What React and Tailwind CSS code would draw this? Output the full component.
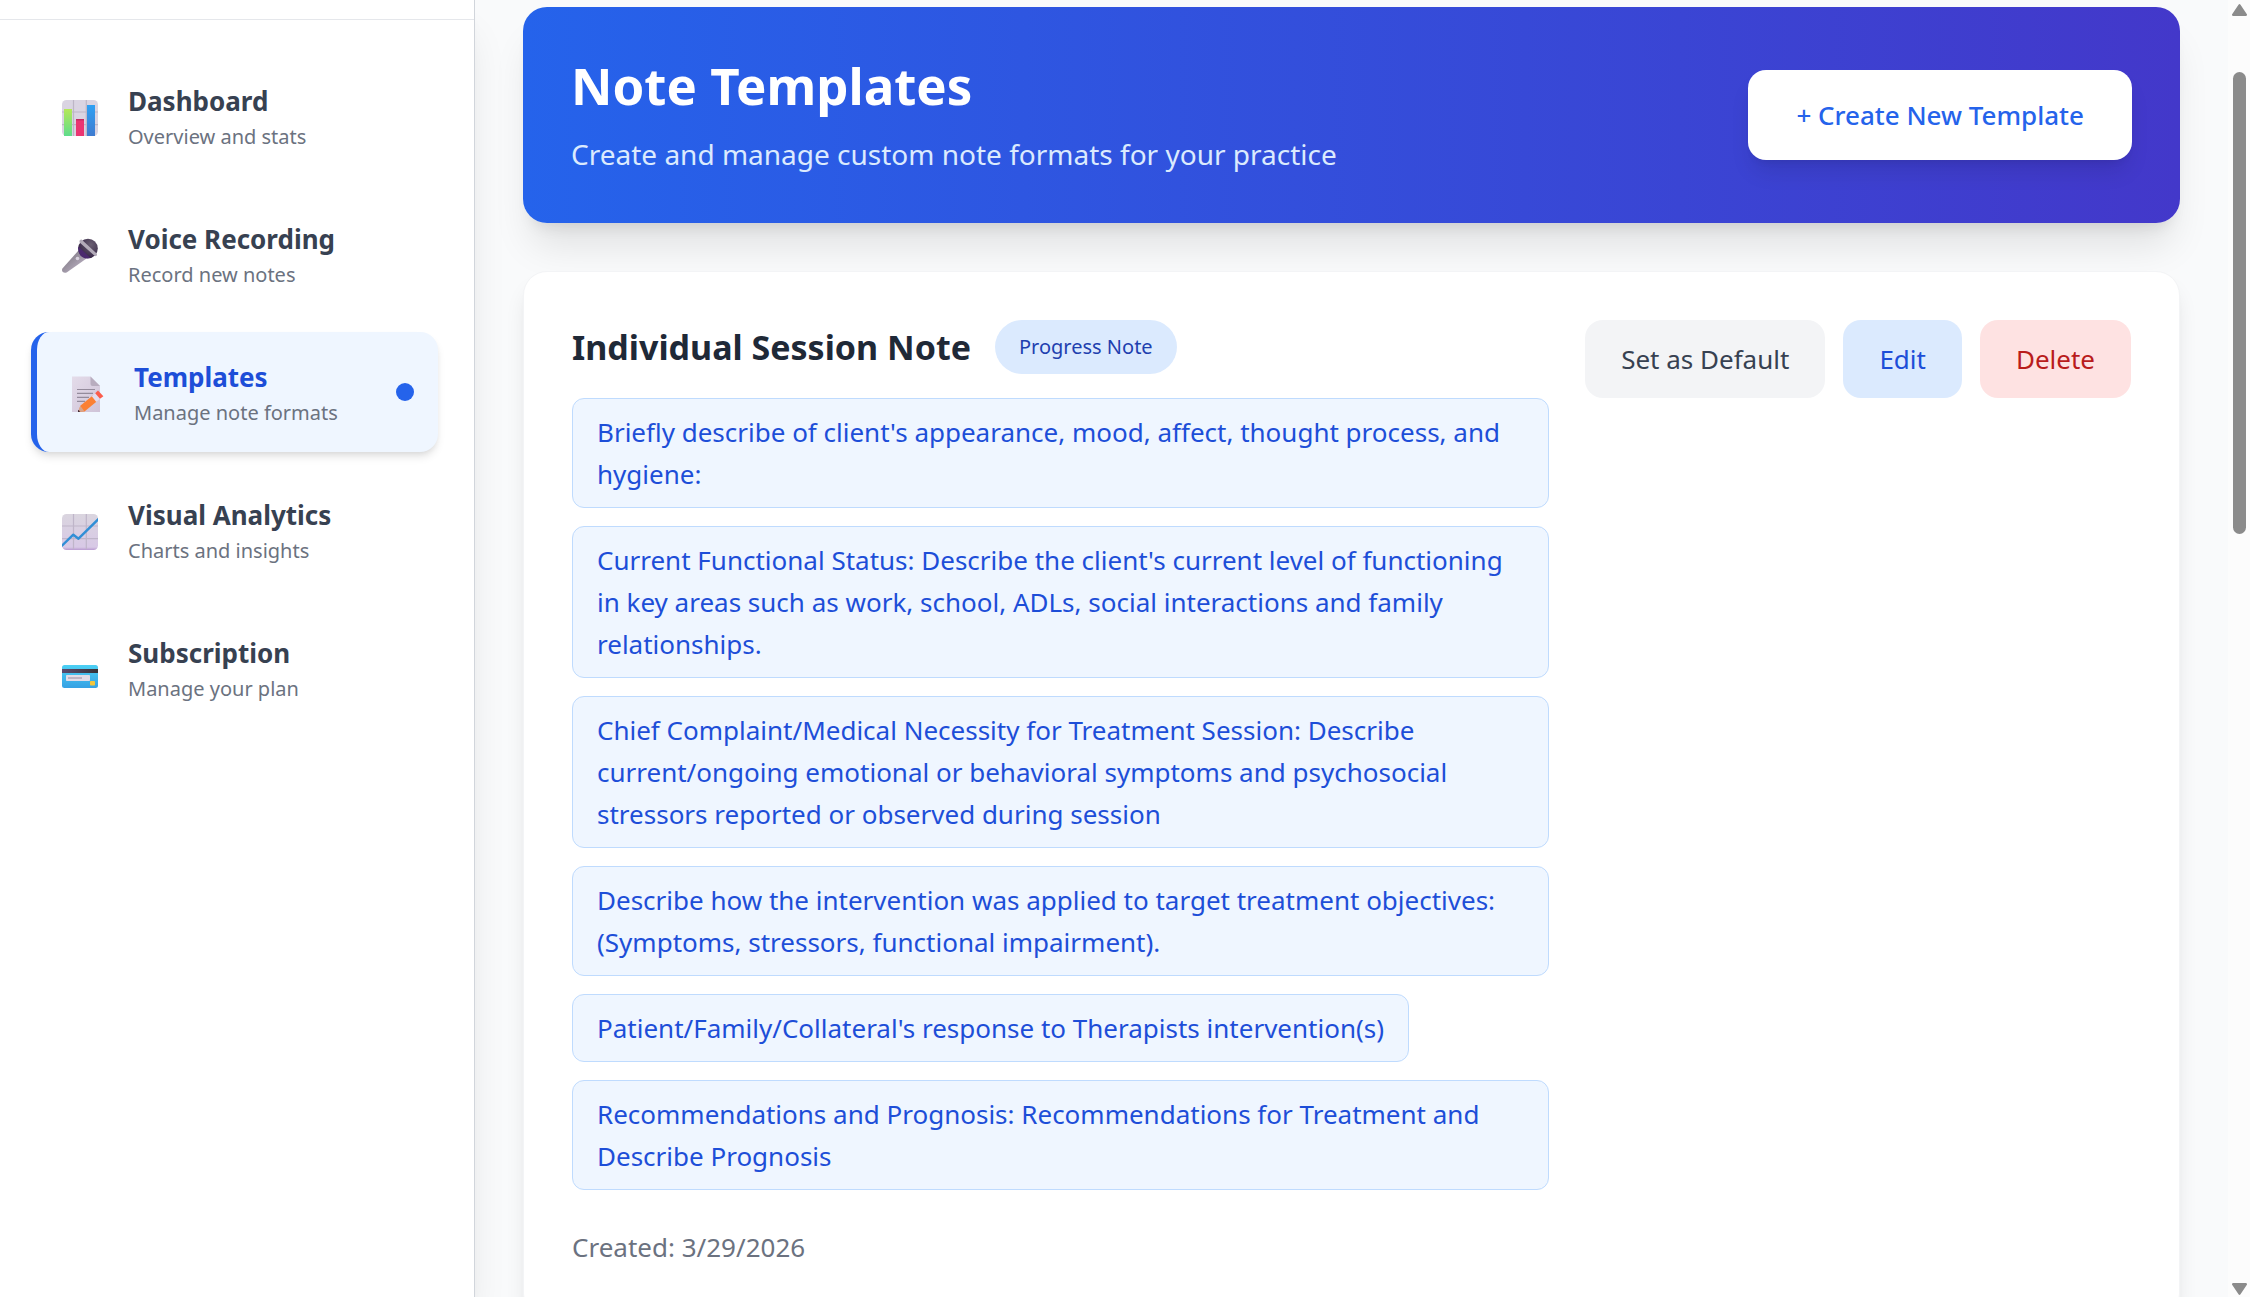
import clsx from 'clsx';

function BarChartIcon() {
  return (
    <svg viewBox="0 0 36 36" className="w-9 h-9 mt-1" aria-hidden="true">
      <defs>
        <linearGradient id="bar-green" x1="0" y1="0" x2="0" y2="1">
          <stop offset="0" stopColor="#b5e858" />
          <stop offset="1" stopColor="#5fdc8c" />
        </linearGradient>
        <linearGradient id="bar-blue" x1="0" y1="0" x2="0" y2="1">
          <stop offset="0" stopColor="#2fa0f3" />
          <stop offset="1" stopColor="#3f7bd0" />
        </linearGradient>
      </defs>
      <rect width="36" height="36" rx="4.5" fill="#dad4e2" />
      <path d="M11.5 0v36M24.3 0v36M0 12h36M0 24.6h36" stroke="#bdb6c6" strokeWidth="1.2" />
      <path d="M2 9h8v27H2z" fill="url(#bar-green)" />
      <path d="M14 19h8v17h-8z" fill="#ea3572" />
      <path d="M14 19h8v1.4h-8z" fill="#c42a60" />
      <path d="M25 5h8v31h-8z" fill="url(#bar-blue)" />
    </svg>
  );
}

function MicIcon() {
  return (
    <svg viewBox="0 0 36 36" className="w-9 h-9 mt-1" aria-hidden="true">
      <defs>
        <linearGradient id="mic-body" x1="0" y1="0" x2="1" y2="1">
          <stop offset="0.3" stopColor="#8b8490" />
          <stop offset="0.8" stopColor="#b9afc1" />
        </linearGradient>
        <radialGradient id="mic-head" cx="0.65" cy="0.3" r="0.7">
          <stop offset="0" stopColor="#6a5f72" />
          <stop offset="1" stopColor="#352545" />
        </radialGradient>
      </defs>
      <path d="M16.5 12.5 24.5 20.5 5 34.3c-3.2 1.6-6-.8-4.6-3.9z" fill="url(#mic-body)" />
      <circle cx="26" cy="10.5" r="9.8" fill="url(#mic-head)" />
      <path d="M16.4 8.5 28.5 20c-5 1.4-9.5-.5-11.3-4.5-1-2.2-1.3-4.7-.8-7z" fill="#4b2a6e" />
      <path d="M19.6 1.6 34.9 15.8c.5 1.4-.6 2.8-2 2.3L17.6 4.6c-.6-1.6.5-3.2 2-3z" fill="#b3abb9" />
      <circle cx="15.5" cy="20.5" r="1.8" fill="#d8d2de" />
    </svg>
  );
}

function MemoIcon() {
  return (
    <svg viewBox="0 0 36 36" className="w-9 h-9 mt-1" aria-hidden="true">
      <defs>
        <linearGradient id="memo-paper" x1="0" y1="0" x2="1" y2="1">
          <stop offset="0" stopColor="#e4dcea" />
          <stop offset="1" stopColor="#cfc3d8" />
        </linearGradient>
      </defs>
      <path d="M4 .5h18.5L32 10v26H4z" fill="url(#memo-paper)" />
      <path d="M22.5.5 32 10h-7.5a2 2 0 0 1-2-2z" fill="#b8adbf" />
      <path d="M9 13.5h18M9 17.3h16M9 21.4h12M9 25.4h8" stroke="#948b9c" strokeWidth="1.2" />
      <path d="M10.5 36 12.3 29.7 24.8 19.5 29.3 25 16.5 35.5z" fill="#fb8034" />
      <path d="M10 36 12.3 29.7 16.5 35.5z" fill="#d9a58c" />
      <path d="M10 36.2v-2.5l2.3 1.8z" fill="#402a32" />
      <path d="M23.8 20.3 27.2 17.2 32 22.8 28.3 26z" fill="#e3dcee" />
      <path d="M27.2 17.2 30 14.5 35.4 20.2 32 22.8z" fill="#fb5c4c" />
    </svg>
  );
}

function TrendIcon() {
  return (
    <svg viewBox="0 0 36 36" className="w-9 h-9 mt-1" aria-hidden="true">
      <defs>
        <linearGradient id="trend-bg" x1="0" y1="0" x2="0" y2="1">
          <stop offset="0" stopColor="#dad5df" />
          <stop offset="0.92" stopColor="#d8c9e6" />
          <stop offset="1" stopColor="#b99bd0" />
        </linearGradient>
        <clipPath id="trend-clip">
          <rect width="36" height="36" rx="4.5" />
        </clipPath>
      </defs>
      <g clipPath="url(#trend-clip)">
        <rect width="36" height="36" fill="url(#trend-bg)" />
        <path d="M11.5 0v35M24.3 0v35M0 12h36M0 24.6h36" stroke="#bfb5c9" strokeWidth="1.2" />
        <path d="M-1 32.5 11.3 20.7 16.5 24.7 37 4.5" fill="none" stroke="#318fd6" strokeWidth="2.4" strokeLinejoin="round" />
      </g>
    </svg>
  );
}

function CardIcon() {
  return (
    <svg viewBox="0 0 36 36" className="w-9 h-9 mt-1" aria-hidden="true">
      <defs>
        <linearGradient id="card-bg" x1="0" y1="0" x2="0" y2="1">
          <stop offset="0" stopColor="#4cd0f4" />
          <stop offset="1" stopColor="#36a1e4" />
        </linearGradient>
        <linearGradient id="card-strip" x1="0" y1="0" x2="1" y2="0">
          <stop offset="0" stopColor="#5b4a70" />
          <stop offset="1" stopColor="#363338" />
        </linearGradient>
      </defs>
      <rect y="13" width="36" height="23" rx="2.5" fill="url(#card-bg)" />
      <path d="M0 17h36v4H0z" fill="url(#card-strip)" />
      <rect x="4" y="23" width="24" height="6" rx="0.8" fill="#e2dce8" />
      <path d="M6 26h14" stroke="#b4abbc" strokeWidth="1.6" />
      <rect x="28" y="29" width="5" height="4.5" rx="0.8" fill="#f3c63c" />
    </svg>
  );
}

const navItems = [
  { name: 'Dashboard', description: 'Overview and stats', icon: BarChartIcon },
  { name: 'Voice Recording', description: 'Record new notes', icon: MicIcon },
  { name: 'Templates', description: 'Manage note formats', icon: MemoIcon, active: true },
  { name: 'Visual Analytics', description: 'Charts and insights', icon: TrendIcon },
  { name: 'Subscription', description: 'Manage your plan', icon: CardIcon },
];

const template = {
  name: 'Individual Session Note',
  type: 'Progress Note',
  created: '3/29/2026',
  sections: [
    "Briefly describe of client's appearance, mood, affect, thought process, and hygiene:",
    "Current Functional Status: Describe the client's current level of functioning in key areas such as work, school, ADLs, social interactions and family relationships.",
    'Chief Complaint/Medical Necessity for Treatment Session: Describe current/ongoing emotional or behavioral symptoms and psychosocial stressors reported or observed during session',
    'Describe how the intervention was applied to target treatment objectives: (Symptoms, stressors, functional impairment).',
    "Patient/Family/Collateral's response to Therapists intervention(s)",
    'Recommendations and Prognosis: Recommendations for Treatment and Describe Prognosis',
  ],
};

function Sidebar() {
  return (
    <aside className="relative z-10 w-[475px] shrink-0 bg-white border-r border-[#d1d5db] shadow-[0_30px_38px_-8px_rgba(0,0,0,0.1),0_12px_15px_-9px_rgba(0,0,0,0.1)]">
      <div className="h-5 border-b border-[#e5e7eb]" />
      <nav className="flex flex-col gap-[18px] pt-9 pl-[31px] pr-9">
        {navItems.map(({ name, description, icon: Icon, active }) => (
          <a
            key={name}
            href="#"
            className={clsx(
              'flex items-center gap-6 p-6 rounded-[18px]',
              active && 'bg-[#eff6ff] border-l-[6px] border-[#2563eb] shadow-[0_6px_9px_-1px_rgba(0,0,0,0.1),0_3px_6px_-3px_rgba(0,0,0,0.1)]'
            )}
          >
            <span className="w-[49px] flex justify-center">
              <Icon />
            </span>
            <span className="flex-1">
              <span className={clsx('block text-[26px] leading-[42px] font-bold', active ? 'text-[#1d4ed8]' : 'text-[#374151]')}>
                {name}
              </span>
              <span className="block text-[20px] leading-[30px] text-[#6b7280]">{description}</span>
            </span>
            {active && <span className="size-[18px] rounded-full bg-[#2563eb]" />}
          </a>
        ))}
      </nav>
    </aside>
  );
}

function PageHeader() {
  return (
    <header className="flex items-center justify-between p-12 rounded-3xl bg-linear-to-r/srgb from-[#2563eb] to-[#4338ca] shadow-[0_30px_38px_-8px_rgba(0,0,0,0.1),0_12px_15px_-9px_rgba(0,0,0,0.1)]">
      <div>
        <h1 className="text-[51px] leading-[60px] font-bold text-white">Note Templates</h1>
        <p className="mt-[18px] text-[28px] leading-[42px] text-[#dbeafe]">
          Create and manage custom note formats for your practice
        </p>
      </div>
      <button className="px-12 py-6 rounded-[18px] bg-white text-[26px] leading-[42px] font-medium text-[#2563eb] shadow-[0_15px_22px_-4px_rgba(0,0,0,0.1),0_6px_9px_-6px_rgba(0,0,0,0.1)]">
        + Create New Template
      </button>
    </header>
  );
}

function TemplateCard({ name, type, created, sections }) {
  return (
    <article className="flex items-start gap-9 p-12 rounded-3xl bg-white border border-[#f3f4f6] shadow-[0_15px_22px_-4px_rgba(0,0,0,0.1),0_6px_9px_-6px_rgba(0,0,0,0.1)]">
      <div className="flex-1">
        <div className="flex items-center gap-6 mb-6">
          <h2 className="text-[34px] leading-[48px] font-bold text-[#1f2937]">{name}</h2>
          <span className="px-6 py-3 rounded-full bg-[#dbeafe] text-[20px] leading-[30px] font-[450] text-[#1e40af]">
            {type}
          </span>
        </div>
        <ul className="flex flex-col items-start gap-[18px]">
          {sections.map((section) => (
            <li
              key={section}
              className="px-6 py-3 rounded-xl bg-[#eff6ff] border border-[#bfdbfe] text-[26px] leading-[42px] font-[450] text-[#1d4ed8]"
            >
              {section}
            </li>
          ))}
        </ul>
        <p className="mt-9 text-[26px] leading-[42px] text-[#6b7280]">Created: {created}</p>
      </div>

      <div className="flex gap-[18px] text-[26px] leading-[42px] font-[450]">
        <button className="px-9 py-[18px] rounded-[18px] bg-[#f3f4f6] text-[#374151]">Set as Default</button>
        <button className="px-9 py-[18px] rounded-[18px] bg-[#dbeafe] text-[#1d4ed8]">Edit</button>
        <button className="px-9 py-[18px] rounded-[18px] bg-[#fee2e2] text-[#b91c1c]">Delete</button>
      </div>
    </article>
  );
}

function ScrollRail() {
  return (
    <div className="w-[22px] shrink-0 flex flex-col items-center pt-1 pb-[2px] bg-[#fcfcfc]" aria-hidden="true">
      <svg viewBox="0 0 15 12" className="w-[15px] h-3 fill-[#8b8b8b]">
        <path d="M6.5.8a1.2 1.2 0 0 1 2 0l6.2 9.2a1.2 1.2 0 0 1-1 2H1.3a1.2 1.2 0 0 1-1-2z" />
      </svg>
      <div className="flex-1 pt-14">
        <div className="w-[13px] h-[462px] rounded-full bg-[#8b8b8b]" />
      </div>
      <svg viewBox="0 0 15 12" className="w-[15px] h-3 fill-[#8b8b8b]">
        <path d="M6.5 11.2a1.2 1.2 0 0 0 2 0L14.7 2a1.2 1.2 0 0 0-1-2H1.3a1.2 1.2 0 0 0-1 2z" />
      </svg>
    </div>
  );
}

export default function App() {
  return (
    <div className="h-screen flex overflow-hidden bg-[#f9fafb] font-['Noto_Sans','Open_Sans',sans-serif]">
      <Sidebar />
      <main className="flex-1 flex flex-col gap-12 px-12 pt-[7px] overflow-hidden">
        <PageHeader />
        <TemplateCard {...template} />
      </main>
      <ScrollRail />
    </div>
  );
}
